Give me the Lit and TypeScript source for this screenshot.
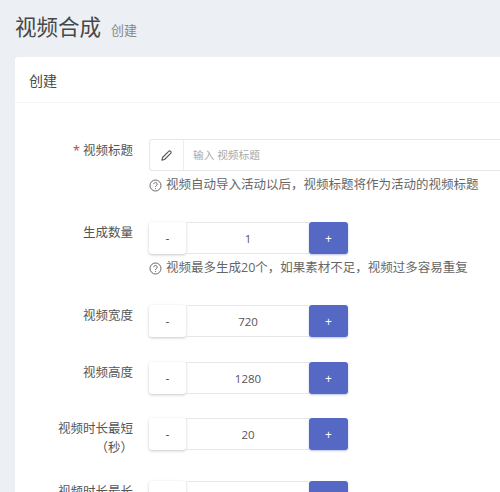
import { LitElement, html, css } from "lit";
import { customElement } from "lit/decorators.js";

@customElement("app-root")
export class AppRoot extends LitElement {
  static styles = css`
    :host { display: block; width: 500px; height: 492px; overflow: hidden; background: #ecf0f5; font-family: "Open Sans", "Noto Sans CJK SC", sans-serif; color: #555; }
    .head { height: 57px; padding-left: 15px; display: flex; align-items: baseline; gap: 10px; box-sizing: border-box; padding-top: 9px; }
    h1 { margin: 0; font-size: 21.5px; font-weight: 400; line-height: 36px; color: #484848; }
    .head small { font-size: 13px; color: #888; }
    .card { margin-left: 15px; width: 520px; background: #fff; border-radius: 3px 0 0 0; height: 600px; }
    .card-head { height: 46px; box-sizing: border-box; padding-left: 14px; display: flex; align-items: center; font-size: 14px; color: #484848; border-bottom: 1px solid #f4f4f4; }
    .form { padding-top: 37px; display: flex; flex-direction: column; }
    .row { display: grid; grid-template-columns: 118px 1fr; column-gap: 16px; }
    .label { text-align: right; font-size: 12.5px; line-height: 19px; color: #555; padding-top: 1px; }
    .req { color: #b5483c; margin-right: 3px; }
    .input { display: flex; height: 32px; width: 400px; box-sizing: border-box; border: 1px solid #e6e6e6; border-radius: 3px 0 0 3px; margin-top: -1px; }
    .addon { width: 33px; flex: none; display: flex; align-items: center; justify-content: center; border-right: 1px solid #eee; }
    .ph { padding-left: 9px; font-size: 10.7px; color: #aaa; line-height: 30px; }
    .help { margin-top: 4px; font-size: 12.5px; line-height: 20px; color: #666; display: flex; align-items: center; gap: 4px; white-space: nowrap; }
    .stepper { display: flex; height: 32px; width: 199px; }
    .minus { width: 37px; flex: none; display: flex; align-items: center; justify-content: center; background: #fff; font-size: 12px; color: #555; border-radius: 3px; box-shadow: 0 1px 3px rgba(0,0,0,.22); }
    .value { flex: 1; display: flex; align-items: center; justify-content: center; font-size: 11.5px; color: #555; border-top: 1px solid #e6e6e6; border-bottom: 1px solid #e6e6e6; border-left: 1px solid #eee; }
    .plus { width: 39px; flex: none; display: flex; align-items: center; justify-content: center; background: #5468c4; color: #fff; font-size: 12px; border-radius: 3px; box-shadow: 0 1px 2px rgba(84,104,196,.4); }
  `;

  private q() {
    return html`<svg width="13" height="13" viewBox="0 0 13 13" fill="none" stroke="#666" stroke-width="1"><circle cx="6.5" cy="6.5" r="5.5"/><path d="M4.8 5.2a1.7 1.7 0 1 1 2.6 1.4c-.6.4-.9.7-.9 1.3"/><path d="M6.5 9.2v.8"/></svg>`;
  }

  private stepper(v: string) {
    return html`<div class="stepper"><div class="minus">-</div><div class="value">${v}</div><div class="plus">+</div></div>`;
  }

  private row(label: unknown, v: string, help: string, mb: number) {
    return html`<div class="row" style="margin-bottom:${mb}px">
      <div class="label">${label}</div>
      <div>${this.stepper(v)}${help ? html`<div class="help">${this.q()}<span>${help}</span></div>` : ""}</div>
    </div>`;
  }

  render() {
    return html`
      <div class="head"><h1>视频合成</h1><small>创建</small></div>
      <div class="card">
        <div class="card-head">创建</div>
        <div class="form">
          <div class="row" style="margin-bottom:27px">
            <div class="label"><span class="req">*</span>视频标题</div>
            <div>
              <div class="input">
                <div class="addon"><svg width="13" height="13" viewBox="0 0 13 13" fill="none" stroke="#555" stroke-width="1.1" stroke-linejoin="round"><path d="M2.5 8.5 8.7 2.3a1.2 1.2 0 0 1 1.8 0l.2.2a1.2 1.2 0 0 1 0 1.8L4.5 10.5l-2.6.6z"/></svg></div>
                <div class="ph">输入 视频标题</div>
              </div>
              <div class="help">${this.q()}<span>视频自动导入活动以后，视频标题将作为活动的视频标题</span></div>
            </div>
          </div>
          ${this.row("生成数量", "1", "视频最多生成20个，如果素材不足，视频过多容易重复", 27)}
          ${this.row("视频宽度", "720", "", 25)}
          ${this.row("视频高度", "1280", "", 24)}
          ${this.row(html`视频时长最短<br />（秒）`, "20", "", 24)}
          ${this.row(html`视频时长最长`, "30", "", 20)}
        </div>
      </div>
    `;
  }
}
